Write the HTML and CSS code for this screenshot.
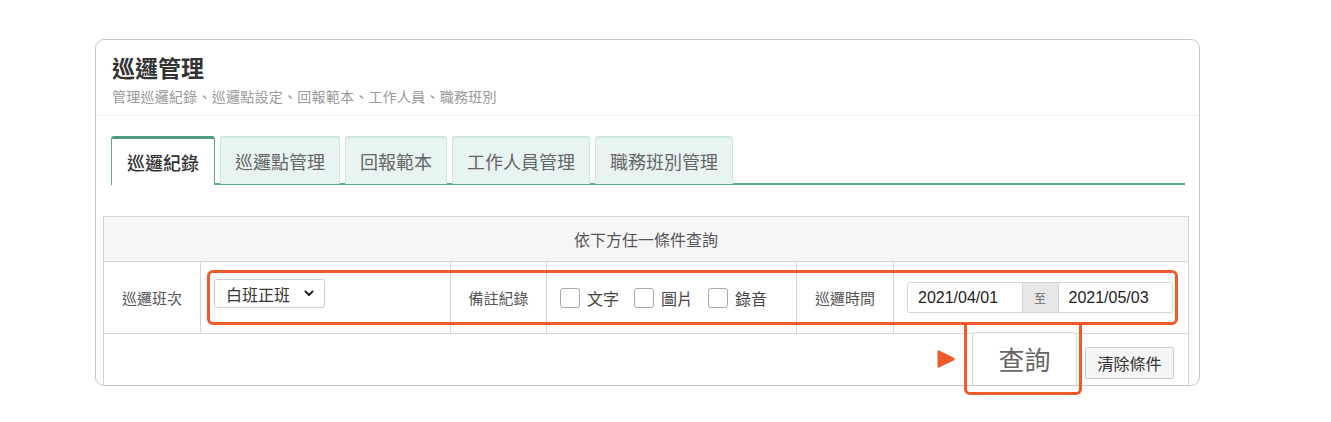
FILE: index.html
```html
<!DOCTYPE html>
<html lang="zh-Hant">
<head>
<meta charset="utf-8">
<title>巡邏管理</title>
<link rel="stylesheet" href="styles.css">
</head>
<body>
<div class="page">
  <div class="card">
    <div class="card-head">
      <div class="title">巡邏管理</div>
      <div class="subtitle">管理巡邏紀錄、巡邏點設定、回報範本、工作人員、職務班別</div>
    </div>
    <div class="tabs">
      <div class="tab active">巡邏紀錄</div>
      <div class="tab">巡邏點管理</div>
      <div class="tab">回報範本</div>
      <div class="tab">工作人員管理</div>
      <div class="tab">職務班別管理</div>
    </div>
    <div class="query">
      <div class="q-head">依下方任一條件查詢</div>
      <div class="q-row">
        <div class="q-cell label">巡邏班次</div>
        <div class="q-cell field">
          <div class="select">
            <span>白班正班</span>
            <svg class="chev" width="10" height="7" viewBox="0 0 10 7"><path d="M1.5 1.5 L5 5 L8.5 1.5" fill="none" stroke="#222" stroke-width="2" stroke-linecap="round" stroke-linejoin="round"/></svg>
          </div>
        </div>
        <div class="q-cell label">備註紀錄</div>
        <div class="q-cell field checks">
          <span class="check"><span class="box"></span>文字</span>
          <span class="check"><span class="box"></span>圖片</span>
          <span class="check"><span class="box"></span>錄音</span>
        </div>
        <div class="q-cell label">巡邏時間</div>
        <div class="q-cell field">
          <div class="daterange">
            <span class="date">2021/04/01</span>
            <span class="to">至</span>
            <span class="date">2021/05/03</span>
          </div>
        </div>
      </div>
      <div class="q-actions">
        <svg class="arrow" width="20" height="22" viewBox="0 0 20 22"><path d="M3 2.5 Q1.5 1.6 1.5 3.5 L1.5 18.5 Q1.5 20.4 3 19.5 L18 12.2 Q19.5 11 18 9.8 Z" fill="#f05a28"/></svg>
        <button class="btn-search">查詢</button>
        <button class="btn-clear">清除條件</button>
      </div>
    </div>
  </div>
  <div class="mark mark-fields"></div>
  <div class="mark mark-button"></div>
</div>
</body>
</html>
```

FILE: styles.css
```css
* { box-sizing: border-box; }
html, body { margin: 0; padding: 0; background: #fff; }
body {
  font-family: "Noto Sans CJK TC", "Noto Sans", sans-serif;
  color: #333;
}
.page {
  position: relative;
  width: 1331px;
  height: 422px;
  padding: 39px 0 0 95px;
}
.card {
  width: 1105px;
  height: 347px;
  border: 1.5px solid #c8c8c8;
  border-radius: 9px;
  overflow: hidden;
  background: #fff;
}
.card-head {
  padding: 12px 16px 9px;
  border-bottom: 1px solid #eef2f5;
}
.title {
  font-size: 23px;
  font-weight: 700;
  line-height: 30px;
  color: #333;
}
.subtitle {
  margin-top: 4px;
  font-size: 14px;
  letter-spacing: 0.25px;
  line-height: 20px;
  color: #999;
}
.tabs {
  display: flex;
  gap: 5px;
  margin: 20px 14px 0 15px;
  height: 49px;
  border-bottom: 2px solid #5aa88d;
  align-items: flex-end;
}
.tab {
  height: 48px;
  margin-bottom: -1px;
  padding: 0 14px;
  display: flex;
  align-items: center;
  font-size: 18px;
  color: #666;
  background: #e8f4f2;
  border: 1px solid #cbe5de;
  border-top: 2px solid #cde6df;
  border-bottom: none;
  border-radius: 3px 3px 0 0;
}
.tab.active {
  height: 49px;
  margin-bottom: -2px;
  padding: 0 15px;
  background: #fff;
  color: #333;
  font-weight: 500;
  border: 1px solid #5aa88d;
  border-top: 3px solid #4e9c82;
  border-bottom: none;
}
.query {
  margin: 31px 10px 0 7px;
  border: 1px solid #d6d6d6;
}
.q-head {
  height: 45px;
  background: #f5f6f8;
  border-bottom: 1px solid #d6d6d6;
  display: flex;
  align-items: center;
  justify-content: center;
  font-size: 16px;
  color: #555;
}
.q-row {
  display: grid;
  grid-template-columns: 97px 250px 96px 250px 97px 1fr;
  height: 72px;
  border-bottom: 1px solid #d6d6d6;
}
.q-cell {
  display: flex;
  align-items: center;
  border-right: 1px solid #d6d6d6;
}
.q-cell:last-child { border-right: none; }
.q-cell.label {
  justify-content: center;
  font-size: 15px;
  color: #555;
}
.q-cell.field { padding-left: 13px; }
.select {
  width: 111px;
  height: 29px;
  margin-top: -8px;
  padding: 0 10px 0 11px;
  display: flex;
  align-items: center;
  justify-content: space-between;
  border: 1px solid #cfcfcf;
  border-radius: 3px;
  font-size: 16px;
  color: #333;
  background: #fff;
}
.checks { padding-left: 16px; gap: 0; }
.check {
  display: flex;
  align-items: center;
  font-size: 16px;
  color: #444;
  margin-right: 15px;
}
.box {
  width: 20px;
  height: 20px;
  border: 1px solid #a8a8a8;
  border-radius: 3px;
  margin-right: 7px;
  background: #fff;
}
.daterange {
  display: flex;
  width: 266px;
  height: 31px;
  border: 1px solid #d4d4d4;
  border-radius: 3px;
  overflow: hidden;
}
.date {
  flex: 1;
  display: flex;
  align-items: center;
  padding-left: 10px;
  font-family: "Liberation Sans", Arial, sans-serif;
  font-size: 16px;
  color: #222;
}
.to {
  width: 37px;
  display: flex;
  align-items: center;
  justify-content: center;
  background: #e8e8e8;
  border-left: 1px solid #d4d4d4;
  border-right: 1px solid #d4d4d4;
  font-size: 12px;
  color: #666;
}
.q-actions {
  height: 60px;
  display: flex;
  justify-content: flex-end;
  align-items: flex-start;
  padding-right: 14px;
}
.arrow { margin-top: 14px; margin-right: 16px; }
.btn-search {
  width: 105px;
  height: 56px;
  margin-top: -2px;
  background: #fff;
  border: 1px solid #d2d2d2;
  border-radius: 4px;
  font-family: inherit;
  font-size: 26px;
  color: #666;
  padding: 0 0 4px;
}
.btn-clear {
  width: 89px;
  height: 32px;
  margin-top: 13px;
  margin-left: 8px;
  background: #f5f5f5;
  border: 1px solid #cdcdcd;
  border-radius: 2px;
  font-family: inherit;
  font-size: 16px;
  color: #333;
  padding: 0;
}
.mark {
  position: absolute;
  border: 3px solid #f05a28;
  border-radius: 6px;
}
.mark-fields { left: 207px; top: 270px; width: 971px; height: 55px; }
.mark-button { left: 964px; top: 322px; width: 118px; height: 73px; border-top: none; border-radius: 0 0 6px 6px; }
```
